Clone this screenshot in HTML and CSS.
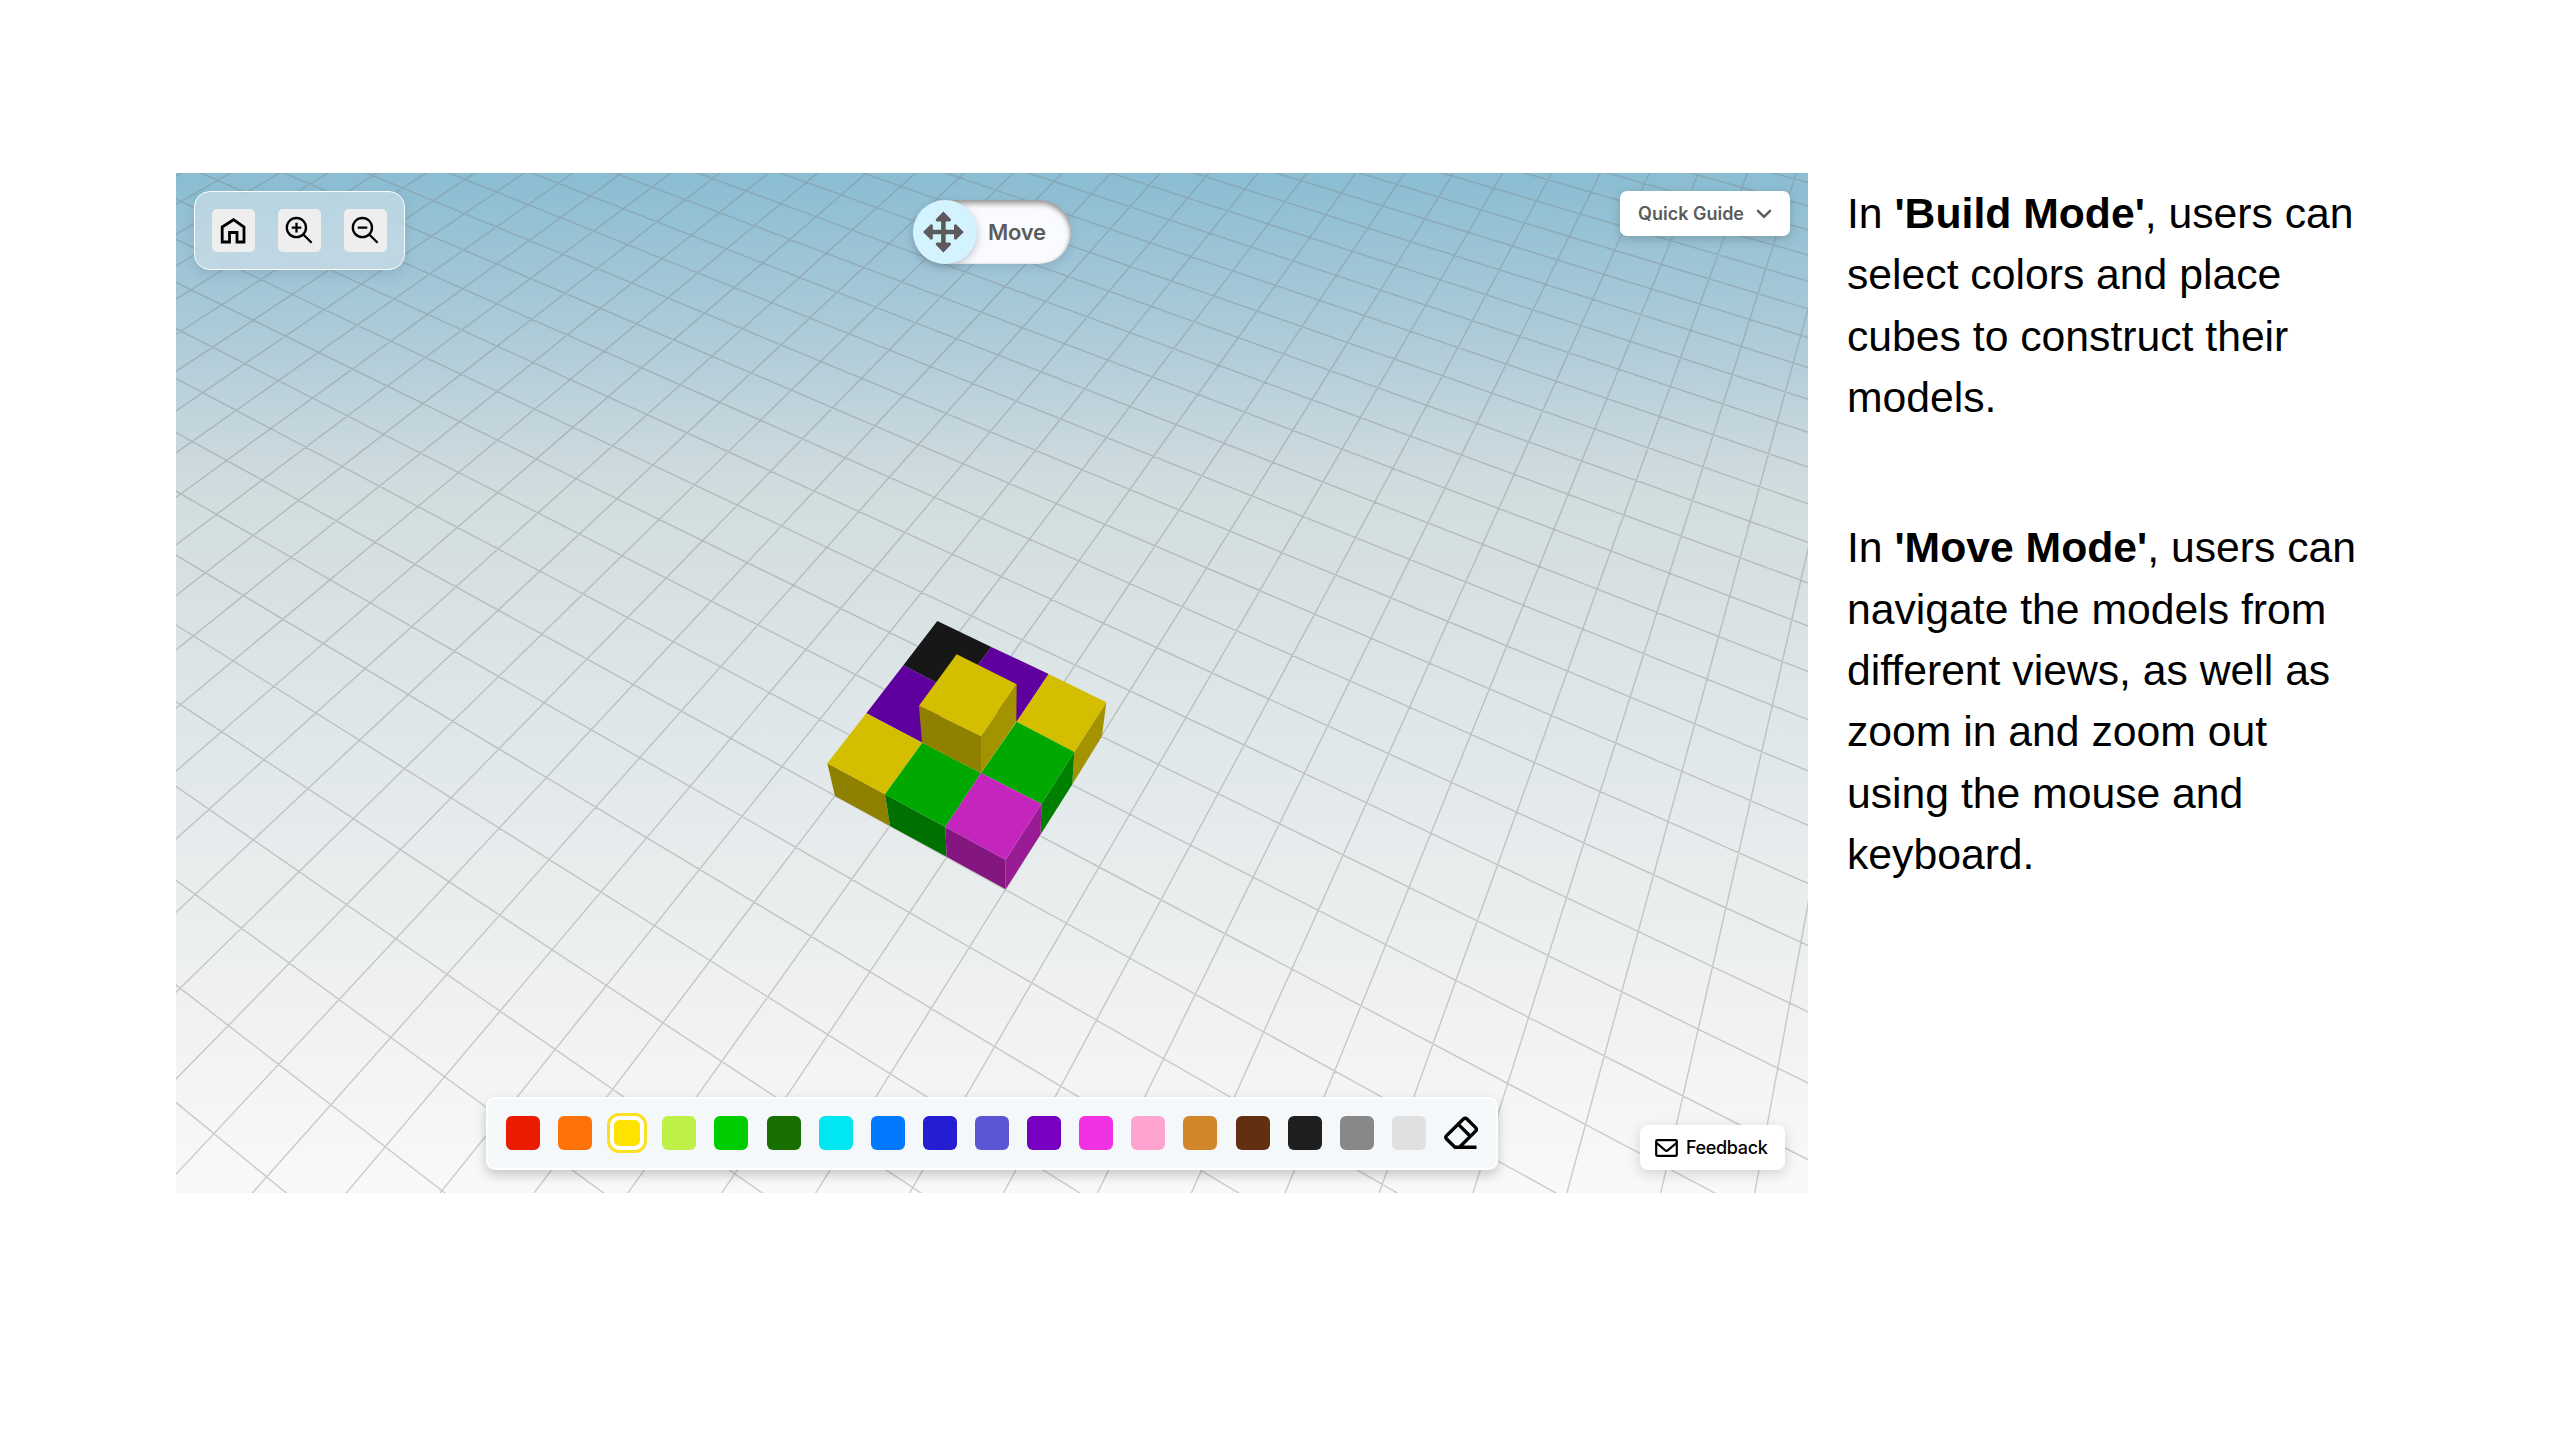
FILE: index.html
```
<!DOCTYPE html>
<html lang="en">
<head>
<meta charset="utf-8">
<title>Cube Builder</title>
<link rel="stylesheet" href="styles.css">
</head>
<body>
<main class="page">
  <section class="scene">
    <svg class="world" viewBox="176 173 1632 1020" aria-hidden="true">
      <path id="grid" class="grid"/>
      <g transform="translate(800 600) scale(.33333)">
        <polygon fill="#171717" points="412,63 574,141 470,280 310,196"/>
        <polygon fill="#5f009e" points="574,141 746,222 650,365 470,280"/>
        <polygon fill="#5f009e" points="310,196 470,280 367,428 199,340"/>
        <polygon fill="#a49300" points="919,307 823,456 817,553 906,408"/>
        <polygon fill="#d3be00" points="746,222 919,307 823,456 650,365"/>
        <polygon fill="#8f8000" points="82,490 255,583 270,678 105,588"/>
        <polygon fill="#d3be00" points="199,340 367,428 255,583 82,490"/>
        <polygon fill="#007000" points="255,583 436,681 440,770 270,678"/>
        <polygon fill="#00a800" points="367,428 543,519 436,681 255,583"/>
        <polygon fill="#008000" points="823,456 724,612 722,703 817,553"/>
        <polygon fill="#00a800" points="650,365 823,456 724,612 543,519"/>
        <polygon fill="#84177f" points="436,681 617,779 617,868 440,770"/>
        <polygon fill="#9a1c94" points="617,779 724,612 722,703 617,868"/>
        <polygon fill="#c325bd" points="543,519 724,612 617,779 436,681"/>
        <polygon fill="#8f8000" points="357,317 543,408 543,519 366,428"/>
        <polygon fill="#a49300" points="543,408 650,253 649,365 543,519"/>
        <polygon fill="#d3be00" points="470,163 650,253 543,408 357,317"/>
      </g>
    </svg>

    <div class="controls">
      <header class="top-bar">
        <nav class="tools">
          <button class="tool" aria-label="Home">
            <svg viewBox="0 0 43 43"><path d="M10.2 18 21.5 10.7 32 18V33H25V23.5H17.5V33H10.2Z" stroke-width="2.8"/></svg>
          </button>
          <button class="tool" aria-label="Zoom in">
            <svg viewBox="0 0 43 43"><circle cx="18.4" cy="18.6" r="9.6"/><path d="M25.3 25.5 33.6 33.7M13.7 18.6h9.6M18.5 13.8v9.6"/></svg>
          </button>
          <button class="tool" aria-label="Zoom out">
            <svg viewBox="0 0 43 43"><circle cx="18.4" cy="18.6" r="9.6"/><path d="M25.3 25.5 33.6 33.7M13.7 18.6h9.6"/></svg>
          </button>
        </nav>
        <div class="mode">
          <span class="knob">
            <svg viewBox="0 0 64 64"><path d="M30.4 19V45M17.5 32H43.5" fill="none" stroke="#5b5b5b" stroke-width="4.6"/><path d="M30.4 11.6 38 19.2Q38.4 21.2 36.6 21.4H24.2Q22.4 21.2 22.8 19.2ZM30.4 52.4 38 44.8Q38.4 42.8 36.6 42.6H24.2Q22.4 42.8 22.8 44.8ZM10 32 17.6 24.4Q19.6 24 19.8 25.8V38.2Q19.6 40 17.6 39.6ZM50.8 32 43.2 24.4Q41.2 24 41 25.8V38.2Q41.2 40 43.2 39.6Z" fill="#5b5b5b"/></svg>
          </span>
          <span class="mode-name">Move</span>
        </div>
        <button class="guide">Quick Guide
          <svg width="16" height="10" viewBox="0 0 16 10"><path d="M2 1.8 8 7.8 14 1.8" fill="none" stroke="#5b5b5b" stroke-width="2.5" stroke-linecap="round"/></svg>
        </button>
      </header>

      <footer class="bottom-bar">
        <div class="palette">
          <i class="swatch red"></i><i class="swatch orange"></i><i class="swatch yellow selected"></i><i class="swatch lime"></i><i class="swatch green"></i><i class="swatch forest"></i><i class="swatch cyan"></i><i class="swatch azure"></i><i class="swatch blue"></i><i class="swatch indigo"></i><i class="swatch purple"></i><i class="swatch magenta"></i><i class="swatch pink"></i><i class="swatch ochre"></i><i class="swatch brown"></i><i class="swatch black"></i><i class="swatch gray"></i><i class="swatch silver"></i>
          <svg class="eraser" viewBox="0 0 34 34"><path d="M32.5 31.3H11L2.6 23Q1 21.2 2.6 19.6L19.4 3Q21.2 1.4 23 3L31.6 11.6Q33.2 13.4 31.6 15.2L15.6 31M14.4 8.4 26 20"/></svg>
        </div>
        <button class="feedback">
          <svg width="23" height="18" viewBox="0 0 23 18"><rect x="1.2" y="1.2" width="20.6" height="15.6" rx="1"/><path d="M1.6 4 10 11.2Q11.5 12.4 13 11.2L21.4 4"/></svg>
          <span>Feedback</span>
        </button>
      </footer>
    </div>
  </section>

  <article class="notes">
    <p>In <b>'Build Mode'</b>, users can select colors and place cubes to construct their models.</p>
    <p>In <b>'Move Mode'</b>, users can navigate the models from different views, as well as zoom in and zoom out using the mouse and keyboard.</p>
  </article>
</main>
<script src="scene.js"></script>
</body>
</html>
```
FILE: styles.css
```
* { box-sizing: border-box; }

body {
  margin: 0;
  background: #fff;
  font-family: Inter, "Liberation Sans", sans-serif;
}

button {
  margin: 0;
  border: 0;
  font-family: inherit;
}

.page {
  display: flex;
  align-items: flex-start;
  gap: 39px;
  width: 2560px;
  height: 1440px;
  padding: 173px 150px 0 176px;
}

/* 3D viewport */
.scene {
  position: relative;
  flex: none;
  width: 1632px;
  height: 1020px;
  overflow: hidden;
  background: linear-gradient(#8abdd3 0%, #abcad8 15%, #d0dbdf 30%, #d3dedf 34%, #dde5e7 50%, #e7eced 67%, #f0f1f2 82%, #f9f9f9 100%);
}

.world {
  position: absolute;
  inset: 0;
  width: 100%;
  height: 100%;
}

.grid {
  fill: none;
  stroke: #808080;
  stroke-opacity: .37;
  stroke-width: 1.4;
}

.controls {
  position: relative;
  display: flex;
  flex-direction: column;
  justify-content: space-between;
  height: 100%;
  padding: 18px 18px 23px;
}

.top-bar,
.bottom-bar {
  display: grid;
  grid-template-columns: 1fr auto 1fr;
  align-items: start;
}

.tools {
  justify-self: start;
  display: flex;
  gap: 23px;
  padding: 17px;
  border: 1px solid #f8fcfd;
  border-radius: 16px;
  background: rgba(235, 241, 247, .45);
  backdrop-filter: blur(8px);
  box-shadow: 0 4px 12px rgba(60, 90, 110, .16);
}

.tool {
  display: flex;
  width: 43px;
  height: 43px;
  padding: 0;
  border-radius: 5px;
  background: #eee;
}

.tool svg {
  width: 43px;
  height: 43px;
  fill: none;
  stroke: #000;
  stroke-width: 2.3;
}

.mode {
  display: flex;
  align-items: center;
  width: 158px;
  height: 64px;
  margin-top: 9px;
  border-radius: 32px;
  background: #fafbfe;
  box-shadow: inset 0 4px 5px rgba(80, 70, 70, .5), inset -1px 0 3px rgba(80, 80, 80, .2), 0 3px 10px rgba(70, 100, 120, .2);
}

.knob {
  flex: none;
  width: 64px;
  height: 64px;
  border-radius: 50%;
  background: #d3f3fe;
  box-shadow: 1px 3px 7px rgba(80, 90, 100, .3);
}

.knob svg { display: block; }

.mode-name {
  margin-left: 11px;
  color: #5b5b5b;
  font-size: 22px;
  font-weight: 600;
  letter-spacing: -.3px;
}

.guide {
  justify-self: end;
  display: flex;
  align-items: center;
  justify-content: space-between;
  width: 170px;
  height: 45px;
  padding: 0 18px;
  border-radius: 7px;
  background: #fff;
  box-shadow: 0 3px 10px rgba(60, 80, 90, .3);
  color: #5b5b5b;
  font-size: 18px;
  font-weight: 600;
}

.bottom-bar { align-items: end; }

.palette {
  grid-column: 2;
  display: flex;
  align-items: center;
  justify-content: space-between;
  width: 1012px;
  height: 73px;
  padding: 0 18px 1px;
  border: 2px solid #fff;
  border-radius: 9px;
  background: #f5f8fb;
  box-shadow: 0 5px 12px rgba(0, 0, 0, .2);
}

.swatch {
  width: 34px;
  height: 34px;
  border-radius: 6px;
}

.selected {
  border: 4px solid #fff;
  border-radius: 9px;
  background-clip: padding-box;
  outline: 3px solid #fbe122;
}

.red { background-color: #ea1b00; }
.orange { background-color: #ff7209; }
.yellow { background-color: #ffe300; }
.lime { background-color: #bff048; }
.green { background-color: #00cd00; }
.forest { background-color: #187000; }
.cyan { background-color: #00e7f1; }
.azure { background-color: #0078ff; }
.blue { background-color: #241dd2; }
.indigo { background-color: #5a56d4; }
.purple { background-color: #7800c0; }
.magenta { background-color: #f032e4; }
.pink { background-color: #ffa4d0; }
.ochre { background-color: #d2862a; }
.brown { background-color: #622f10; }
.black { background-color: #1f1f1f; }
.gray { background-color: #888; }
.silver { background-color: #e0e0e0; }

.eraser {
  width: 34px;
  height: 34px;
  fill: none;
  stroke: #000;
  stroke-width: 3.4;
}

.feedback {
  justify-self: end;
  display: flex;
  align-items: center;
  gap: 8px;
  width: 145px;
  height: 45px;
  margin-right: 5px;
  padding: 0 0 0 15px;
  border-radius: 8px;
  background: #fff;
  box-shadow: 0 4px 14px rgba(0, 0, 0, .15);
  color: #000;
  font-size: 18px;
  font-weight: 500;
  letter-spacing: -.35px;
}

.feedback svg {
  fill: none;
  stroke: #000;
  stroke-width: 2.2;
}

/* Explanatory text */
.notes {
  width: 524px;
  padding-top: 10px;
  color: #000;
  font: 42.7px/61.4px "Liberation Sans", Arial, sans-serif;
}

.notes p { margin: 0 0 88.5px; }
```
FILE: scene.js
```
// Ground plane projection: maps grid coordinates (i, j) to viewport pixels.
const H = [41.717788, 65.585406, 1005.4312, 16.924934, -28.616297, 889.6263, -0.018068943, 0.030534229];
const REACH = 60;

function project(i, j) {
  const w = H[6] * i + H[7] * j + 1;
  if (w < 0.15) return null;
  return [(H[0] * i + H[1] * j + H[2]) / w, (H[3] * i + H[4] * j + H[5]) / w];
}

function line(at) {
  const points = [];
  for (let t = -REACH; t <= REACH; t++) {
    const p = at(t);
    if (p) points.push(p.map(v => v.toFixed(1)).join(' '));
  }
  return points.length > 1 ? 'M' + points[0] + 'L' + points[points.length - 1] : '';
}

let d = '';
for (let c = -REACH; c <= REACH; c++) {
  d += line(t => project(c, t)) + line(t => project(t, c));
}
document.getElementById('grid').setAttribute('d', d);
```
